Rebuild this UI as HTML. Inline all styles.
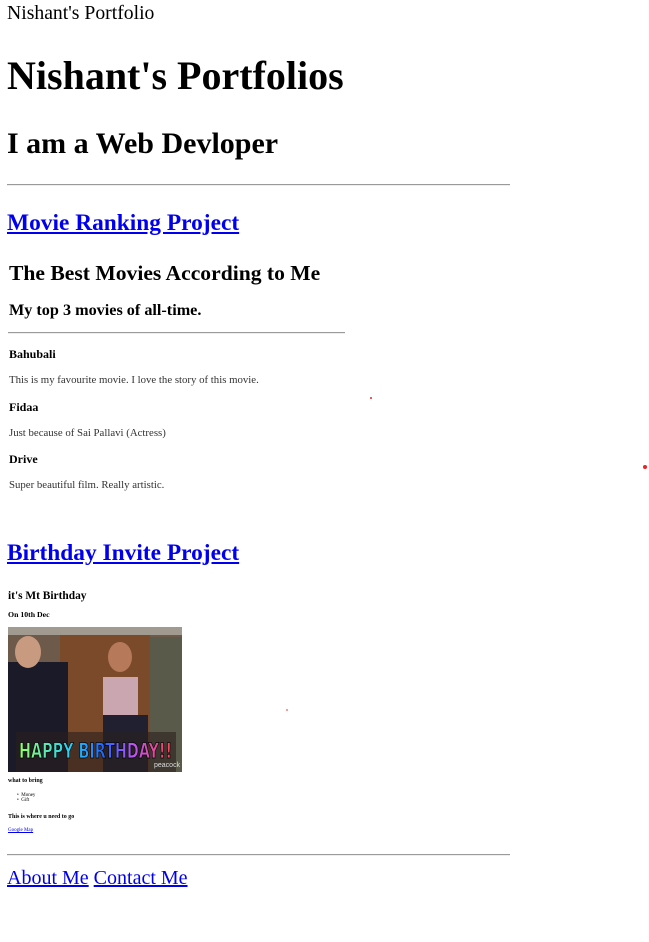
<!DOCTYPE html>
<html><head><meta charset="utf-8"><style>
body{margin:0;width:649px;height:942px;background:#fff;font-family:"Liberation Serif",serif;color:#000;position:relative;overflow:hidden}
.a{position:absolute;white-space:nowrap;line-height:1}
b,.b{font-weight:bold}
a{color:#0000ee;text-decoration:underline}
.hr{position:absolute;height:0;border-top:1px solid #9a9a9a;border-bottom:1px solid #eee}
.dot{position:absolute;background:#e22;border-radius:50%}
</style></head><body>
<div class="a" style="left:7px;top:4px;font-size:19.7px">Nishant's Portfolio</div>
<div class="a b" style="left:7px;top:56px;font-size:40px">Nishant's Portfolios</div>
<div class="a b" style="left:7px;top:129px;font-size:30px">I am a Web Devloper</div>
<div class="hr" style="left:7px;top:184px;width:503px"></div>
<div class="a b" style="left:7px;top:212px;font-size:23.4px"><a>Movie Ranking Project</a></div>
<div class="a b" style="left:9px;top:263px;font-size:21.6px">The Best Movies According to Me</div>
<div class="a b" style="left:9px;top:302px;font-size:16.2px">My top 3 movies of all-time.</div>
<div class="hr" style="left:8px;top:332px;width:337px"></div>
<div class="a b" style="left:9px;top:348px;font-size:12px">Bahubali</div>
<div class="a" style="left:9px;top:375px;font-size:10.8px;color:#333">This is my favourite movie. I love the story of this movie.</div>
<div class="a b" style="left:9px;top:401px;font-size:12px">Fidaa</div>
<div class="a" style="left:9px;top:428px;font-size:10.8px;color:#333">Just because of Sai Pallavi (Actress)</div>
<div class="a b" style="left:9px;top:453px;font-size:12px">Drive</div>
<div class="a" style="left:9px;top:480px;font-size:10.8px;color:#333">Super beautiful film. Really artistic.</div>
<div class="dot" style="left:370px;top:397px;width:2px;height:2px"></div>
<div class="dot" style="left:643px;top:465px;width:4px;height:4px"></div>
<div class="a b" style="left:7px;top:542px;font-size:23.4px"><a>Birthday Invite Project</a></div>
<div class="a b" style="left:8px;top:591px;font-size:11.4px">it's Mt Birthday</div>
<div class="a b" style="left:8px;top:611px;font-size:7.8px">On 10th Dec</div>
<svg class="a" style="left:8px;top:627px" width="174" height="145" viewBox="0 0 174 145">
<rect width="174" height="145" fill="#6e5a4a"/>
<rect x="52" y="5" width="90" height="140" fill="#7a4a2a"/>
<rect x="142" y="10" width="32" height="135" fill="#5a5a4a"/>
<rect x="0" y="0" width="174" height="8" fill="#a09a90"/>
<rect x="0" y="35" width="60" height="110" fill="#1a1a28"/>
<ellipse cx="20" cy="25" rx="13" ry="16" fill="#c89a80"/>
<rect x="95" y="50" width="35" height="40" fill="#c9a6b0"/>
<rect x="95" y="88" width="45" height="57" fill="#202030"/>
<ellipse cx="112" cy="30" rx="12" ry="15" fill="#b67a5a"/>
<rect x="8" y="105" width="160" height="40" fill="#2a2020" opacity=".6"/>
<defs><linearGradient id="g" x1="0" x2="1"><stop offset="0" stop-color="#9f6"/><stop offset=".35" stop-color="#2cf"/><stop offset=".55" stop-color="#26f"/><stop offset=".75" stop-color="#b5e"/><stop offset="1" stop-color="#f45"/></linearGradient></defs>
<text x="11" y="131" font-family="DejaVu Sans,sans-serif" font-weight="bold" font-size="21" fill="url(#g)" stroke="#000" stroke-width=".8" textLength="153" lengthAdjust="spacingAndGlyphs">HAPPY BIRTHDAY!!</text>
<text x="146" y="140" font-family="Liberation Sans,sans-serif" font-size="7" fill="#ddd">peacock</text>
</svg>
<div class="a b" style="left:8px;top:778px;font-size:6px">what to bring</div>
<div class="a" style="left:17px;top:793px;font-size:5px">•&nbsp;&nbsp;Money<br>•&nbsp;&nbsp;Gift</div>
<div class="a b" style="left:8px;top:814px;font-size:6px">This is where u need to go</div>
<div class="a" style="left:8px;top:828px;font-size:5px"><a>Google Map</a></div>
<div class="dot" style="left:286px;top:709px;width:2px;height:2px;opacity:.6"></div>
<div class="hr" style="left:7px;top:854px;width:503px"></div>
<div class="a" style="left:7px;top:868px;font-size:20px"><a>About Me</a> <a>Contact Me</a></div>
</body></html>
